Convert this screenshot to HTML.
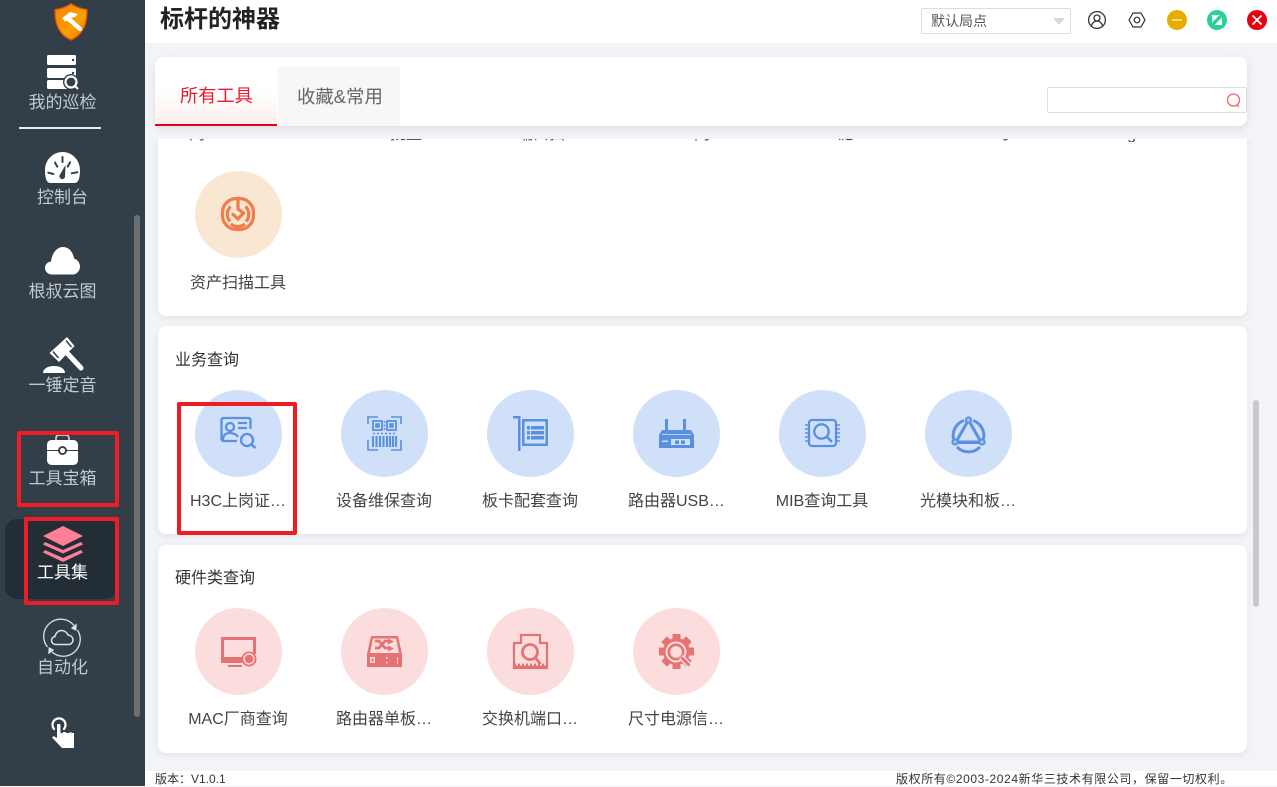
<!DOCTYPE html>
<html lang="zh"><head><meta charset="utf-8"><title>标杆的神器</title>
<style>
*{box-sizing:border-box;margin:0;padding:0}
html,body{width:1277px;height:786px;overflow:hidden;background:#f3f4f8;font-family:"Liberation Sans","Noto Sans CJK SC",sans-serif}
.a{position:absolute}
#side{left:0;top:0;width:145px;height:786px;background:#323e48}
.nav{position:absolute;left:0;width:125px;text-align:center;font-size:17px;line-height:24px;color:#c3c9cd;white-space:nowrap}
svg{position:absolute;display:block;overflow:visible}
.card{position:absolute;left:158px;width:1089px;background:#fff;border-radius:8px;box-shadow:0 2px 7px rgba(60,70,90,.1)}
.sec{position:absolute;left:175px;font-size:16px;line-height:22px;color:#333;white-space:nowrap}
.c{position:absolute;width:87px;height:87px;border-radius:50%}
.l{position:absolute;width:100px;height:24px;line-height:24px;font-size:16px;color:#444;text-align:center;white-space:nowrap;overflow:hidden;text-overflow:ellipsis}
.blue{background:#cfe0f8}.red{background:#fcdddd}.org{background:#fae7d2}
.box{position:absolute;border:4px solid #ee1c25;border-radius:2px}
</style></head><body>

<div class="a" style="left:145px;top:0;width:1132px;height:43px;background:#fff"></div>
<div class="a" style="left:160px;top:3px;font-size:24px;line-height:34px;font-weight:700;color:#222">标杆的神器</div>

<div class="a" style="left:921px;top:8px;width:150px;height:26px;border:1px solid #ddd;border-radius:2px;background:#fff"></div>
<div class="a" style="left:931px;top:10px;font-size:14px;line-height:22px;color:#555">默认局点</div>
<div class="a" style="left:1053px;top:18px;border-left:6px solid transparent;border-right:6px solid transparent;border-top:7px solid #d8d8d8"></div>

<svg style="left:1087px;top:10px" width="20" height="20" viewBox="0 0 20 20" fill="none" stroke="#333" stroke-width="1.3"><circle cx="10" cy="10" r="8.4"/><circle cx="10" cy="8" r="3"/><path d="M4.6 15.6c.8-3 2.8-4.5 5.4-4.5s4.600 1.500 5.400 4.500"/></svg>
<svg style="left:1127px;top:10px" width="20" height="20" viewBox="0 0 20 20" fill="none" stroke="#333" stroke-width="1.2"><path d="M6 3h8l4 7-4 7H6l-4-7z" stroke-linejoin="round"/><circle cx="10" cy="10" r="2.8"/></svg>
<div class="a" style="left:1167px;top:10px;width:20px;height:20px;border-radius:50%;background:#e6ac00"></div>
<div class="a" style="left:1172px;top:19px;width:10px;height:2px;background:#f9dc88"></div>
<div class="a" style="left:1207px;top:10px;width:20px;height:20px;border-radius:50%;background:#2ad19a"></div>
<svg style="left:1207px;top:10px" width="20" height="20" viewBox="0 0 20 20"><path d="M5 5h7.500L5 12.500z M15 15H7.500L15 7.500z" fill="#fff"/></svg>
<div class="a" style="left:1247px;top:10px;width:20px;height:20px;border-radius:50%;background:#e60012"></div>
<svg style="left:1247px;top:10px" width="20" height="20" viewBox="0 0 20 20"><path d="M5.500 5.500l9 9M14.500 5.500l-9 9" stroke="#fff" stroke-width="1.800"/></svg>

<!-- content -->
<div class="a" style="left:145px;top:139px;width:1132px;height:632px;overflow:hidden">
  <div class="a" style="left:13px;top:-20px;width:1089px;height:197px;background:#fff;border-radius:8px;box-shadow:0 2px 7px rgba(60,70,90,.1)"></div>
</div>
<div class="a" style="left:145px;top:139px;width:1102px;height:3px;overflow:hidden">
  <div class="l" style="left:2px;top:-16px">网</div>
  <div class="l" style="left:211px;top:-16px">批量</div>
  <div class="l" style="left:346px;top:-16px">端口扫</div>
  <div class="l" style="left:507px;top:-16px">网</div>
  <div class="l" style="left:650px;top:-16px">链</div>
  <div class="l" style="left:812px;top:-16px">子</div>
  <div class="l" style="left:925px;top:-16px">Ping</div>
</div>

<div class="c org" style="left:195px;top:171px"></div>
<svg style="left:220px;top:196px" width="36" height="36" viewBox="0 0 36 36" fill="none" stroke="#f07c4b" stroke-width="3.200"><rect x="2.500" y="2.500" width="31" height="31" rx="14"/><path d="M10.500 10.500a11 11 0 0 0-.5 15M25.500 10.500a11 11 0 0 1 .5 15M11 28a11 11 0 0 0 14 0"/><path d="M18 3v10l5.500 4-5.500 6-6-5.500" stroke-width="3.200"/><path d="M18 29v5"/></svg>
<div class="l" style="left:188px;top:272px">资产扫描工具</div>

<!-- card 2 -->
<div class="card" style="top:326px;height:208px"></div>
<div class="sec" style="top:350px">业务查询</div>
<div class="c blue" style="left:195px;top:390px"></div>
<div class="c blue" style="left:341px;top:390px"></div>
<div class="c blue" style="left:487px;top:390px"></div>
<div class="c blue" style="left:633px;top:390px"></div>
<div class="c blue" style="left:779px;top:390px"></div>
<div class="c blue" style="left:925px;top:390px"></div>

<svg style="left:220px;top:416px" width="38" height="36" viewBox="0 0 38 36" fill="none" stroke="#5b8fe0" stroke-width="2.300"><path d="M17 25H3.500a2 2 0 0 1-2-2V4a2 2 0 0 1 2-2h25a2 2 0 0 1 2 2v9"/><circle cx="10" cy="11" r="4"/><path d="M3 24c0-5 3-7 7-7s7 2 8 4"/><path d="M18 7h9M18 12h9"/><circle cx="27" cy="24" r="6"/><path d="M31.500 28.500l4 3.500" stroke-width="2.600"/></svg>

<svg style="left:367px;top:416px" width="35" height="35" viewBox="0 0 35 35" fill="none" stroke="#5b8fe0" stroke-width="1.600"><path d="M1 8V1h10M24 1h10v7M1 24v10h10M24 34h10V24"/><rect x="6" y="5" width="9" height="9" stroke-width="1.800"/><rect x="20" y="5" width="9" height="9" stroke-width="1.800"/><rect x="9" y="8" width="3" height="3" fill="#5b8fe0"/><rect x="23" y="8" width="3" height="3" fill="#5b8fe0"/><path d="M17.500 5v10" stroke-dasharray="2 1.500"/><path d="M6 17.500h23" stroke-dasharray="2 2"/><path d="M6 20v11M9.500 20v11M13 20v11M16.500 20v11M20 20v11M23 20v11M26 20v11M29 20v11" stroke-width="2.100"/></svg>

<svg style="left:513px;top:416px" width="35" height="35" viewBox="0 0 35 35"><path d="M0 0h7.500v35H5V2.500H0z" fill="#5b8fe0"/><path d="M9 3h26v27H9z M11.500 5.500v22h21v-22z" fill="#5b8fe0" fill-rule="evenodd"/><path d="M14 10h3v3.500h-3zM18 10h13v3.500H18zM14 15h3v3.500h-3zM18 15h13v3.500H18zM14 20h3v3.500h-3zM18 20h13v3.500H18z" fill="#5b8fe0"/></svg>

<svg style="left:659px;top:419px" width="35" height="29" viewBox="0 0 35 29"><path d="M6 0h3v12H6zM24 0h3v12h-3z" fill="#5b8fe0"/><path d="M3 11h29l3 5v13H0V16z" fill="#5b8fe0"/><path d="M3 15.500h29" stroke="#cfe0f8" stroke-width=".8"/><path d="M12 20h19v6H12z" fill="#cfe0f8"/><path d="M16 21.500h4v3.500h-4zM22 21.500h4v3.500h-4z" fill="#5b8fe0"/><path d="M3 21.500h6V23H3z" fill="#cfe0f8"/></svg>

<svg style="left:805px;top:419px" width="35" height="28" viewBox="0 0 35 28" fill="none" stroke="#5b8fe0" stroke-width="2.300"><rect x="4" y="1" width="27" height="26" rx="3"/><circle cx="16.500" cy="12.500" r="7.200"/><path d="M22 18l5 5" stroke-width="2.600"/><path d="M0 6h4M0 10h4M0 14h4M0 18h4M0 22h4M31 6h4M31 10h4M31 14h4M31 18h4M31 22h4" stroke-width="1.600"/></svg>

<svg style="left:951px;top:417px" width="35" height="34" viewBox="0 0 35 34" fill="none" stroke="#5b8fe0" stroke-width="3"><path d="M13 3.500A16 16 0 0 0 2.500 22M22 3.500A16 16 0 0 1 32.500 22M6 30a16 16 0 0 0 23 0"/><path d="M17.500 3L5 25h25z" stroke-linejoin="round"/><path d="M6 26.500h23" stroke="#5b8fe0" stroke-width="1"/><circle cx="17.500" cy="3" r="2.600" fill="#a9c6f0" stroke-width="2"/><circle cx="4" cy="25" r="2.600" fill="#a9c6f0" stroke-width="2"/><circle cx="31" cy="25" r="2.600" fill="#a9c6f0" stroke-width="2"/></svg>

<div class="l" style="left:190px;top:490px">H3C上岗证书查询</div>
<div class="l" style="left:334px;top:490px">设备维保查询</div>
<div class="l" style="left:480px;top:490px">板卡配套查询</div>
<div class="l" style="left:628px;top:490px">路由器USB接口查询</div>
<div class="l" style="left:772px;top:490px">MIB查询工具</div>
<div class="l" style="left:920px;top:490px">光模块和板卡查询</div>

<!-- card 3 -->
<div class="card" style="top:545px;height:208px"></div>
<div class="sec" style="top:568px">硬件类查询</div>
<div class="c red" style="left:195px;top:608px"></div>
<div class="c red" style="left:341px;top:608px"></div>
<div class="c red" style="left:487px;top:608px"></div>
<div class="c red" style="left:633px;top:608px"></div>

<svg style="left:221px;top:637px" width="35" height="30" viewBox="0 0 35 30"><path d="M0 0h35v17h-3V3H3v19h18v4H0z" fill="#e57373"/><path d="M7 28h14v2H7z" fill="#e57373"/><path d="M3 20h19v3H3z" fill="#e57373"/><circle cx="28" cy="22" r="6.600" fill="#fcdddd" stroke="#e57373" stroke-width="1.800"/><circle cx="28" cy="22" r="4.200" fill="#e57373"/></svg>

<svg style="left:367px;top:636px" width="35" height="31" viewBox="0 0 35 31"><path d="M4 0h27l4 18v13H0V18z M6 2.500L3 17h29L29 2.500z" fill="#e57373" fill-rule="evenodd"/><path d="M8 5h4l6 7h4M8 12h4l6-7h4" fill="none" stroke="#e57373" stroke-width="2.800"/><path d="M21 2.500l6 3-6 3zM21 9.500l6 3-6 3z" fill="#e57373"/><path d="M3 21h5v6H3z" fill="#fcdddd"/><path d="M4.500 22.500h2v3h-2z" fill="#e57373"/><path d="M19 21h1.500v1.500H19zM19 26h1.500v1.500H19zM30 21h1v7h-1z" fill="#fcdddd"/></svg>

<svg style="left:513px;top:634px" width="35" height="35" viewBox="0 0 35 35" fill="none" stroke="#e57373" stroke-width="2.200"><path d="M1 34V9h7V1h19v8h7v25z"/><circle cx="17" cy="18" r="7.500" stroke-width="2.800"/><path d="M22.500 24l5 6" stroke-width="2.800"/><path d="M1 30.500h33" stroke-width="2" stroke-dasharray="2 2"/><path d="M1 33h33" stroke-width="3"/></svg>

<svg style="left:659px;top:634px" width="35" height="35" viewBox="0 0 35 35"><circle cx="17.500" cy="17.500" r="13.500" fill="#e57373"/><g fill="#e57373"><rect x="13.500" y="0" width="8" height="35"/><rect x="0" y="13.500" width="35" height="8"/><rect x="13.500" y="0" width="8" height="35" transform="rotate(45 17.500 17.500)"/><rect x="13.500" y="0" width="8" height="35" transform="rotate(-45 17.500 17.500)"/></g><circle cx="17" cy="18" r="10.500" fill="#fcdddd"/><circle cx="17" cy="18" r="7.200" fill="none" stroke="#e57373" stroke-width="2.600"/><path d="M22 23l9 9" stroke="#fcdddd" stroke-width="5.500"/><path d="M22.500 23.500l8 8" stroke="#e57373" stroke-width="2.800"/></svg>

<div class="l" style="left:188px;top:708px">MAC厂商查询</div>
<div class="l" style="left:336px;top:708px">路由器单板信息查询</div>
<div class="l" style="left:482px;top:708px">交换机端口信息查询</div>
<div class="l" style="left:628px;top:708px">尺寸电源信息查询</div>

<div class="a" style="left:1253px;top:400px;width:6px;height:207px;border-radius:3px;background:#c9c9cc"></div>

<!-- tab bar -->
<div class="a" style="left:155px;top:57px;width:1092px;height:69px;background:#fff;border-radius:8px;box-shadow:0 3px 8px rgba(60,70,90,.12)"></div>
<div class="a" style="left:155px;top:90px;width:122px;height:36px;background:linear-gradient(#fff,#fdeeee);border-bottom:2px solid #e60012"></div>
<div class="a" style="left:180px;top:83px;font-size:18.200px;line-height:26px;color:#e8192c">所有工具</div>
<div class="a" style="left:278px;top:67px;width:122px;height:59px;background:#f7f7f7"></div>
<div class="a" style="left:297px;top:84px;font-size:18.400px;line-height:26px;color:#666;white-space:nowrap">收藏&amp;常用</div>
<div class="a" style="left:1047px;top:87px;width:200px;height:26px;border:1px solid #ddd;border-radius:2px;background:#fff"></div>
<svg style="left:1226px;top:93px" width="15" height="15" viewBox="0 0 15 15" fill="none" stroke="#f4606c" stroke-width="1.300"><circle cx="7.500" cy="7" r="6"/><path d="M11 12l2 2"/></svg>

<!-- footer -->
<div class="a" style="left:145px;top:771px;width:1132px;height:15px;background:#fff"></div>
<div class="a" style="left:155px;top:772px;font-size:12px;line-height:15px;color:#333;white-space:nowrap">版本：V1.0.1</div>
<div class="a" style="left:896px;top:772px;font-size:12px;line-height:15px;color:#333;white-space:nowrap;letter-spacing:.6px">版权所有©2003-2024新华三技术有限公司，保留一切权利。</div>

<!-- sidebar -->
<div class="a" id="side"></div>
<div class="a" style="left:134px;top:215px;width:6px;height:502px;border-radius:3px;background:#6e6e6e"></div>
<div class="a" style="left:5px;top:519px;width:112px;height:80px;border-radius:12px;background:#222d36"></div>

<svg style="left:54px;top:3px" width="34" height="38" viewBox="0 0 34 38"><defs><linearGradient id="g" x1="0" y1="0" x2="1" y2="1"><stop offset="0" stop-color="#f97d09"/><stop offset=".6" stop-color="#f9a100"/><stop offset="1" stop-color="#f26a00"/></linearGradient></defs><path d="M17 .6c4 3 10 5 16 6 .5 14-3.500 25-16 30.500C4.500 31.600.5 20.600 1 6.600c6-1 12-3 16-6z" fill="url(#g)" stroke="#e04e00" stroke-width="1.200"/><path d="M8 15l8-6 8 2-3 3-4 1 1.500 1.500-3.500 3-2-2-2 1z" fill="#fff"/><path d="M16 17l10 9" stroke="#fff" stroke-width="4.500" stroke-linecap="round"/></svg>

<svg style="left:47px;top:55px" width="32" height="35" viewBox="0 0 32 35"><rect x="0" y="0" width="29" height="10" rx="1.500" fill="#fff"/><rect x="0" y="13" width="29" height="10" rx="1.500" fill="#fff"/><rect x="0" y="25" width="22" height="9" rx="1.500" fill="#fff"/><circle cx="26" cy="5" r="1.200" fill="#323e48"/><circle cx="26" cy="18" r="1.200" fill="#323e48"/><circle cx="24" cy="27" r="8" fill="#323e48"/><circle cx="24" cy="27" r="5.500" fill="none" stroke="#fff" stroke-width="2.200"/><path d="M28 31l3 3" stroke="#fff" stroke-width="2"/></svg>
<div class="nav" style="top:91px">我的巡检</div>
<div class="a" style="left:19px;top:127px;width:82px;height:2px;background:#e8eaec"></div>

<svg style="left:45px;top:152px" width="35" height="31" viewBox="0 0 35 31"><path d="M17.500 0C8 0 0 8 0 18c0 4 .5 9 2 11 1 1.500 2 2 4 2h23c2 0 3-.500 4-2 1.500-2 2-7 2-11C35 8 27 0 17.500 0z" fill="#fff"/><path d="M17.500 5v5M10 10.600l2.300 4M25 10.300l-2.300 4.300M3.300 20.700l5 1.300M26.700 21.300l5.600-1" stroke="#323e48" stroke-width="2" stroke-linecap="round"/><path d="M14.500 23.500L20.500 13l-.5 12a2.800 2.800 0 0 1-5.500-1.500z" fill="#323e48"/></svg>
<div class="nav" style="top:186px">控制台</div>

<svg style="left:45px;top:247px" width="35" height="28" viewBox="0 0 35 28"><path d="M7 27.500C3 27.500 0 24.500 0 21s2.500-6 6-6.500C7 6 12 0 18 0c6 0 10 5 11 11.500 3.500 1 6 4.500 6 8 0 4.500-3.500 8-7 8z" fill="#fff"/></svg>
<div class="nav" style="top:280px">根叔云图</div>

<svg style="left:43px;top:336px" width="41" height="38" viewBox="0 0 41 38"><path d="M6.500 17L24 1l7.500 9L16 26z" fill="#fff"/><path d="M10 15.500l5.500 6.500M23 4.500l5.500 6.500" stroke="#323e48" stroke-width="1.500"/><path d="M25 18l13 14" stroke="#fff" stroke-width="5" stroke-linecap="round"/><path d="M0 37c0-3.500 3.500-7 11-7s11 3.500 11 7z" fill="#fff"/></svg>
<div class="nav" style="top:374px">一锤定音</div>

<svg style="left:47px;top:434px" width="31" height="31" viewBox="0 0 31 31"><path d="M9 7V4c0-2 2-3 3-3h7c1 0 3 1 3 3v3" fill="none" stroke="#dfe2e4" stroke-width="1.500"/><path d="M5 6h21c3 0 5 2 5 5v15c0 3-2 5-5 5H5c-3 0-5-2-5-5V11c0-3 2-5 5-5z" fill="#fff"/><path d="M0 16.500h31" stroke="#323e48" stroke-width="1"/><circle cx="15.500" cy="16.500" r="4.500" fill="#323e48"/><circle cx="15.500" cy="16.500" r="2.600" fill="#fff"/></svg>
<div class="nav" style="top:467px">工具宝箱</div>

<svg style="left:43px;top:526px" width="40" height="36" viewBox="0 0 40 36" fill="#ff7f97"><path d="M20 0l20 10-20 10L0 10z"/><path d="M2 16l18 8 18-8 2 2.500-20 9-20-9z"/><path d="M2 24l18 8 18-8 2 2.500-20 9.500-20-9.500z"/></svg>
<div class="nav" style="top:561px;color:#fff">工具集</div>

<svg style="left:44px;top:620px" width="37" height="36" viewBox="0 0 37 36" fill="none" stroke="#dfe2e4" stroke-width="1.300"><path d="M3.500 27A17 17 0 0 1 30 5.500M33.500 10A17 17 0 0 1 8 32"/><path d="M28 8l4-3-.2 5zM9 30l-4 3 .2-5z" fill="#dfe2e4"/><path d="M12 24.500c-3 0-4.500-2-4.500-4s1.500-3.700 3.500-4c.5-3.500 3.500-6 6.500-6s5.500 2 6.500 4.500c3 .5 5 2.500 5 5s-2 4.500-4.500 4.500z" stroke-width="1.500"/></svg>
<div class="nav" style="top:656px">自动化</div>

<svg style="left:51px;top:717px" width="24" height="31" viewBox="0 0 24 31"><path d="M3 12a6.500 6.500 0 1 1 10 0" fill="none" stroke="#fff" stroke-width="2.200" stroke-linecap="round"/><path d="M6 8c0-1.500 3.500-1.500 3.500 0v8h2.500v-1h3v1h3v-.500h3v.500h2v15H11L1 20.500l1.500-1.500 3.500 2z" fill="#fff"/></svg>

<!-- annotation boxes -->
<div class="box" style="left:17px;top:431px;width:102px;height:76px"></div>
<div class="box" style="left:24px;top:517px;width:95px;height:88px"></div>
<div class="box" style="left:177px;top:402px;width:120px;height:133px"></div>
</body></html>
